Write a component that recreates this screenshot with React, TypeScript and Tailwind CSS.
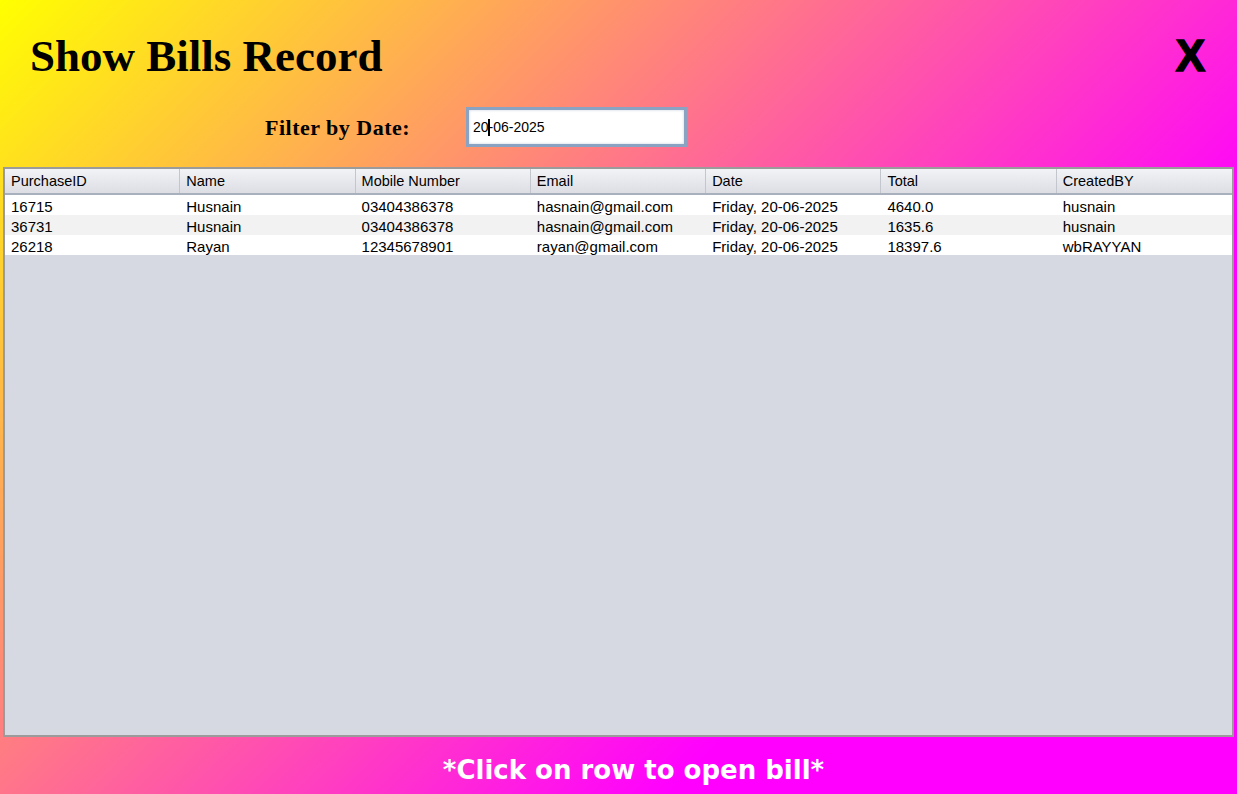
import React from 'react';

interface Bill {
  id: string;
  name: string;
  mobile: string;
  email: string;
  date: string;
  total: string;
  createdBy: string;
}

const columns = ['PurchaseID', 'Name', 'Mobile Number', 'Email', 'Date', 'Total', 'CreatedBY'];

const bills: Bill[] = [
  { id: '16715', name: 'Husnain', mobile: '03404386378', email: 'hasnain@gmail.com', date: 'Friday, 20-06-2025', total: '4640.0', createdBy: 'husnain' },
  { id: '36731', name: 'Husnain', mobile: '03404386378', email: 'hasnain@gmail.com', date: 'Friday, 20-06-2025', total: '1635.6', createdBy: 'husnain' },
  { id: '26218', name: 'Rayan', mobile: '12345678901', email: 'rayan@gmail.com', date: 'Friday, 20-06-2025', total: '18397.6', createdBy: 'wbRAYYAN' },
];

const serif = "font-['Liberation_Serif','Times_New_Roman',serif]";
const sans = "font-['Liberation_Sans',Arial,sans-serif]";

export default function App() {
  return (
    <div className="flex h-[794px] w-[1237px] flex-col overflow-hidden bg-[linear-gradient(135deg,#ffff00_0%,#ff00ff_72%)]">
      {/* header */}
      <div className="relative h-[167px] shrink-0">
        <div className="flex items-start justify-between pl-[30px] pr-[32px] pt-[28px]">
          <h1 className={`${serif} text-[45px] font-bold leading-[56px] text-black`}>Show Bills Record</h1>
          <button className={`${sans} mt-[4px] text-[44px] font-bold leading-[48px] text-black [-webkit-text-stroke:1.5px_black]`}>X</button>
        </div>
        <div className="mt-[23px] flex items-center pl-[265px]">
          <label className={`${serif} w-[201px] text-[22px] font-bold tracking-[0.5px] text-black`}>Filter by Date:</label>
          <div className="h-[40px] w-[221px] border-[3px] border-[#8aa3c2] bg-white shadow-[inset_0_0_3px_#c8d2de]">
            <div className={`${sans} flex h-full items-center pl-[4px] text-[14px] text-black`}>
              <span>20</span>
              <span className="mx-[-1px] h-[17px] w-[2px] bg-black" />
              <span>-06-2025</span>
            </div>
          </div>
        </div>
      </div>

      {/* table */}
      <div className="mx-[3px] flex h-[570px] shrink-0 flex-col border-2 border-[#9b9b9b] bg-[#d6d9e1]">
        <div className="grid h-[26px] shrink-0 grid-cols-7 border-b-2 border-[#a9b0bd] bg-[linear-gradient(#f2f3f6,#dcdee4)]">
          {columns.map((c, i) => (
            <div
              key={c}
              className={`${sans} flex items-center pl-[6px] pt-[1px] text-[14.5px] text-black ${i < columns.length - 1 ? 'border-r border-[#c3c6cc]' : ''}`}
            >
              {c}
            </div>
          ))}
        </div>
        {bills.map((b, i) => (
          <div key={b.id} className={`grid h-[20px] grid-cols-7 ${i % 2 === 1 ? 'bg-[#f2f2f2]' : 'bg-white'}`}>
            {[b.id, b.name, b.mobile, b.email, b.date, b.total, b.createdBy].map((v, j) => (
              <div key={j} className={`${sans} flex items-center pl-[6px] pt-[3px] text-[15px] leading-none text-black`}>
                {v}
              </div>
            ))}
          </div>
        ))}
      </div>

      {/* footer */}
      <div className="flex flex-1 items-center justify-center pl-[30px] pt-[10px]">
        <p className="font-['Comic_Sans_MS','DejaVu_Sans',sans-serif] text-[26px] font-bold text-white">
          *Click on row to open bill*
        </p>
      </div>
    </div>
  );
}
